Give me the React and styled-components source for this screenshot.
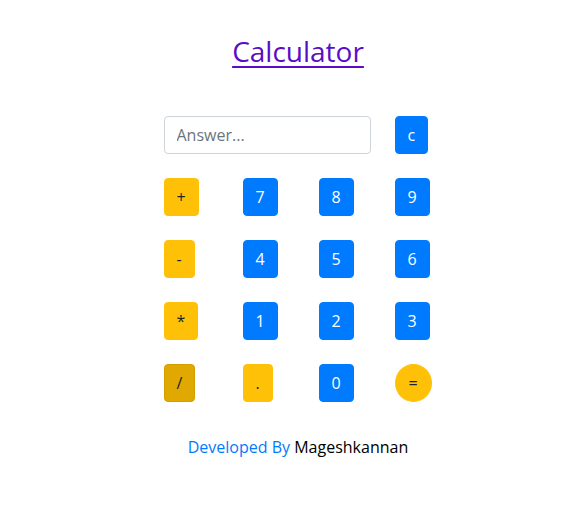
import styled, { createGlobalStyle } from 'styled-components';

const GlobalStyle = createGlobalStyle`
  body {
    margin: 0;
    background: #fff;
    font-family: "Open Sans", "Noto Sans", Arial, sans-serif;
    color: #212529;
  }
`;

const Page = styled.div`
  display: flex;
  flex-direction: column;
  align-items: center;
  width: 576px;
  padding-top: 30px;
`;

const Title = styled.a`
  color: #5a0cc8;
  font-size: 28px;
  font-weight: 500;
  line-height: 42px;
  text-decoration: underline;
  text-underline-offset: 4px;
  margin-left: 20px;
`;

const Pad = styled.div`
  display: grid;
  grid-template-columns: 79px 76px 76px 40px;
  grid-auto-rows: 38px;
  row-gap: 24px;
  margin-top: 44px;
  margin-left: 22px;
`;

const Answer = styled.input`
  grid-column: span 3;
  width: 207px;
  height: 38px;
  box-sizing: border-box;
  padding: 6px 12px;
  font-family: inherit;
  font-size: 16px;
  color: #495057;
  border: 1px solid #ced4da;
  border-radius: 4px;
  outline: none;
  &::placeholder {
    color: #6c757d;
  }
`;

const Key = styled.button`
  justify-self: start;
  height: 38px;
  min-width: ${({ $round }) => ($round ? '37px' : 'auto')};
  padding: 0 ${({ $pad }) => $pad || 12}px;
  font-family: inherit;
  font-size: 16px;
  border: 1px solid ${({ $kind }) => ($kind === 'num' ? '#007bff' : $kind === 'active' ? '#d39e00' : '#ffc107')};
  border-radius: ${({ $round }) => ($round ? '50%' : '4px')};
  background: ${({ $kind }) => ($kind === 'num' ? '#007bff' : $kind === 'active' ? '#e0a800' : '#ffc107')};
  color: ${({ $kind }) => ($kind === 'num' ? '#fff' : '#212529')};
  cursor: pointer;
`;

const Footer = styled.p`
  margin: 34px 0 0 20px;
  font-size: 16px;
  font-weight: 500;
  color: #000;
`;

const Dev = styled.span`
  color: #007bff;
`;

const rows = [
  [['+', 'op'], ['7', 'num'], ['8', 'num'], ['9', 'num']],
  [['-', 'op'], ['4', 'num'], ['5', 'num'], ['6', 'num']],
  [['*', 'op'], ['1', 'num'], ['2', 'num'], ['3', 'num']],
  [['/', 'active'], ['.', 'op'], ['0', 'num'], ['=', 'op', true]],
];

export default function App() {
  return (
    <Page>
      <GlobalStyle />
      <Title href="#">Calculator</Title>
      <Pad>
        <Answer placeholder="Answer..." />
        <Key $kind="num">c</Key>
        {rows.flat().map(([label, kind, round]) => (
          <Key key={label} $kind={kind} $round={round}>
            {label}
          </Key>
        ))}
      </Pad>
      <Footer>
        <Dev>Developed By</Dev> Mageshkannan
      </Footer>
    </Page>
  );
}
